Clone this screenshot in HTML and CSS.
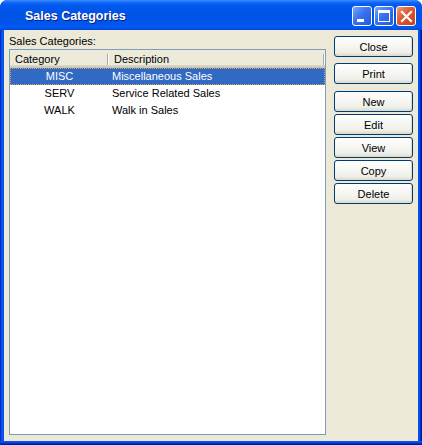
FILE: index.html
```html
<!DOCTYPE html>
<html>
<head>
<meta charset="utf-8">
<link rel="stylesheet" href="styles.css">
</head>
<body>
<div class="window">
  <div class="titlebar">
    <span class="title">Sales Categories</span>
    <div class="tbuttons">
      <div class="tbtn min"><span class="min-bar"></span></div>
      <div class="tbtn max"><span class="max-box"></span></div>
      <div class="tbtn close">
        <svg width="19" height="19" viewBox="0 0 19 19"><path d="M5 5 L14 14 M14 5 L5 14" stroke="#fff" stroke-width="2.2" stroke-linecap="square"/></svg>
      </div>
    </div>
  </div>
  <div class="client">
    <div class="leftcol">
      <div class="label">Sales Categories:</div>
      <div class="list">
        <div class="header">
          <div class="hcell cat">Category</div>
          <div class="hcell desc">Description</div>
        </div>
        <div class="row selected"><div class="cell cat">MISC</div><div class="cell desc">Miscellaneous Sales</div></div>
        <div class="row"><div class="cell cat">SERV</div><div class="cell desc">Service Related Sales</div></div>
        <div class="row"><div class="cell cat">WALK</div><div class="cell desc">Walk in Sales</div></div>
      </div>
    </div>
    <div class="buttons">
      <button class="btn">Close</button>
      <button class="btn gap1">Print</button>
      <button class="btn gap2">New</button>
      <button class="btn">Edit</button>
      <button class="btn">View</button>
      <button class="btn">Copy</button>
      <button class="btn">Delete</button>
    </div>
  </div>
</div>
</body>
</html>
```
FILE: styles.css
```css
html, body { margin: 0; padding: 0; background: #fff; }
body { font-family: "Liberation Sans", Arial, sans-serif; font-size: 11px; color: #000; }

.window {
  width: 422px; height: 445px; box-sizing: border-box;
  display: flex; flex-direction: column;
  background: linear-gradient(to right, #0019B0 0, #0842E0 1px, #0A58F0 2px, #0754E8 3px, #0754E8 419px, #0842E0 420px, #0019B0 421px);
  border-radius: 7px 7px 0 0;
  padding: 0 4px 4px 4px;
  position: relative;
  overflow: hidden;
}
.window::after {
  content: ""; position: absolute; left: 0; right: 0; bottom: 0; height: 4px;
  background: linear-gradient(to bottom, #0A58F0 0, #0842E0 2px, #0019B0 3px);
}

.titlebar {
  height: 30px; margin: 0 -4px; flex: none;
  display: flex; align-items: center; justify-content: space-between;
  background: linear-gradient(to bottom, #3A8CFF 0, #0A62F5 3px, #0058EE 6px, #0054E4 14px, #0055E8 22px, #005AF4 27px, #0048D8 30px);
  border-radius: 7px 7px 0 0;
  padding: 0 6px 0 25px;
  box-sizing: border-box;
}
.title {
  color: #fff; font-weight: bold; font-size: 12.5px;
  text-shadow: 1px 1px 0 #0A1E80;
  margin-top: 1px;
}
.tbuttons { display: flex; gap: 2px; margin-top: 2px; }
.tbtn {
  width: 20px; height: 20px; box-sizing: border-box;
  border: 1px solid #fff; border-radius: 3px;
  background: linear-gradient(135deg, #7BA6FA 0, #3A72F0 45%, #2258E0 100%);
  position: relative; display: flex; align-items: center; justify-content: center;
}
.tbtn.close { background: linear-gradient(135deg, #F09A7A 0, #E0562F 45%, #C8401E 100%); }
.tbtn.close svg { position: absolute; left: -0.5px; top: -0.5px; }
.min-bar { position: absolute; left: 4px; top: 12px; width: 7px; height: 3px; background: #fff; }
.max-box { position: absolute; left: 3px; top: 3px; width: 12px; height: 12px; box-sizing: border-box; border: 1px solid #fff; border-top-width: 3px; }

.client {
  flex: 1; background: #ECE9D8;
  display: flex; gap: 8px;
  padding: 0 5px 6px 5px;
}
.leftcol { width: 317px; display: flex; flex-direction: column; }
.label { height: 19px; line-height: 13px; padding-top: 5px; box-sizing: border-box; }
.list {
  flex: 1; background: #fff; border: 1px solid #7F9DB9;
}
.header {
  height: 18px; display: flex;
  background: linear-gradient(to bottom, #EBEADB 0, #EBEADB 15px, #E2DECD 15px, #D6D2C2 16px, #CBC7B8 17px);
}
.hcell { line-height: 18px; position: relative; }
.hcell.cat { width: 99px; padding-left: 5px; box-sizing: border-box; }
.hcell.cat::after {
  content: ""; position: absolute; right: 0; top: 4px; height: 11px; width: 2px;
  background: linear-gradient(to right, #ACA899 0, #ACA899 1px, #fff 1px);
}
.hcell.desc { flex: 1; padding-left: 5px; }
.hcell.desc::after {
  content: ""; position: absolute; right: 0; top: 4px; height: 11px; width: 2px;
  background: linear-gradient(to right, #ACA899 0, #ACA899 1px, #fff 1px);
}
.row { height: 17px; display: flex; line-height: 17px; }
.row.selected { background: #316AC5; color: #fff; outline: 1px dotted #D9A441; outline-offset: -1px; }
.cell.cat { width: 99px; text-align: center; }
.cell.desc { flex: 1; padding-left: 3px; }

.buttons { width: 79px; display: flex; flex-direction: column; gap: 2px; padding-top: 6px; }
.btn {
  height: 21px; width: 79px; padding: 0; margin: 0;
  font-family: "Liberation Sans", Arial, sans-serif; font-size: 11px; font-weight: normal; color: #000;
  border: 1px solid #003C74; border-radius: 3px;
  background: linear-gradient(to bottom, #FFFFFF 0, #F7F7F4 40%, #F0F0EA 80%, #E3E1D8 92%, #D6D0C5 100%);
  box-shadow: inset -1px -1px 0 #E0DCCB;
}
.btn.gap1 { margin-top: 4px; }
.btn.gap2 { margin-top: 5px; }
```
